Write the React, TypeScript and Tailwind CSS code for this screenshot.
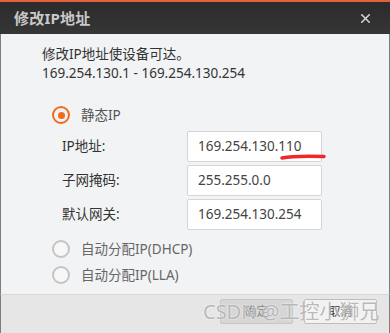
import { X } from "lucide-react";

const font = { fontFamily: '"Noto Sans", "Noto Sans CJK SC", sans-serif' };

const fields = [
  { label: "IP地址:", value: "169.254.130.110", mark: true },
  { label: "子网掩码:", value: "255.255.0.0" },
  { label: "默认网关:", value: "169.254.130.254" },
];

function Radio({ checked, label }: { checked?: boolean; label: string }) {
  return (
    <div className="flex items-center h-[20px]">
      <span
        className={
          checked
            ? "w-[18px] h-[18px] rounded-full border-2 border-[#f26b1d] flex items-center justify-center"
            : "w-[18px] h-[18px] rounded-full border-2 border-[#c4c4c4] bg-[#f7f7f7]"
        }
      >
        {checked && <span className="w-[7px] h-[7px] rounded-full bg-[#f26b1d]" />}
      </span>
      <span className={checked ? "ml-[11px] text-[#555]" : "ml-[11px] text-[#666]"}>{label}</span>
    </div>
  );
}

export default function App() {
  return (
    <div className="w-[390px] h-[333px] relative overflow-hidden text-[13.5px]" style={font}>
      {/* title bar */}
      <div className="h-[34px] border-t-2 border-[#e2603c] bg-gradient-to-b from-[#2b2b2b] to-[#363636] flex items-center justify-between pl-[14px] pr-[17px]">
        <span className="text-[15px] font-bold text-[#c9c9c9] tracking-[0.2px]">修改IP地址</span>
        <X size={15} strokeWidth={2.6} className="text-[#d2d2d2]" />
      </div>

      {/* body */}
      <div className="h-[260px] bg-[#f2f3f5] border-x border-[#7d7d7d] pl-[41px] pt-[11px] text-[#333]">
        <div className="leading-[19px]">
          <div>修改IP地址使设备可达。</div>
          <div>169.254.130.1 - 169.254.130.254</div>
        </div>

        <div className="mt-[22px] pl-[10px]">
          <Radio checked label="静态IP" />
        </div>

        <div className="mt-[6px] flex flex-col gap-[3px]">
          {fields.map((f) => (
            <div key={f.label} className="flex items-center pl-[20px]">
              <span className="w-[125px] text-[#333]">{f.label}</span>
              <div className="relative w-[135px] h-[31px] bg-white border border-[#d5d5d5] rounded-[2px] flex items-center pl-[10px] text-[#444]">
                {f.value}
                {f.mark && (
                  <svg className="absolute left-[92px] top-[21px]" width="46" height="8" viewBox="0 0 46 8">
                    <path d="M2 5 C 12 3, 30 3, 44 3.5" stroke="#f02828" strokeWidth="3.5" strokeLinecap="round" fill="none" />
                  </svg>
                )}
              </div>
            </div>
          ))}
        </div>

        <div className="mt-[9px] pl-[10px] flex flex-col gap-[6px]">
          <Radio label="自动分配IP(DHCP)" />
          <Radio label="自动分配IP(LLA)" />
        </div>
      </div>

      {/* footer */}
      <div className="h-[39px] bg-[#e6e6e6] border-t border-[#d6d6d6] border-x border-x-[#7d7d7d] flex items-start justify-end gap-[11px] pt-[4px] pr-[12px]">
        <div className="w-[73px] h-[25px] bg-[#d6d6d6] border border-[#c6c6c6] rounded-[2px] flex items-center justify-center text-[12px] text-[#8a8a8a]">
          确定
        </div>
        <div className="w-[73px] h-[25px] bg-[#f2f2f2] border border-[#bdbdbd] rounded-[2px] flex items-center justify-center text-[12px] text-[#333]">
          取消
        </div>
      </div>

      {/* watermark */}
      <span className="absolute left-[203px] top-[298px] text-[20px] leading-[28px] text-[#a9a9a9]/80 [text-shadow:0_0_2px_#ffffff]">
        CSDN @工控小狮兄
      </span>
    </div>
  );
}
